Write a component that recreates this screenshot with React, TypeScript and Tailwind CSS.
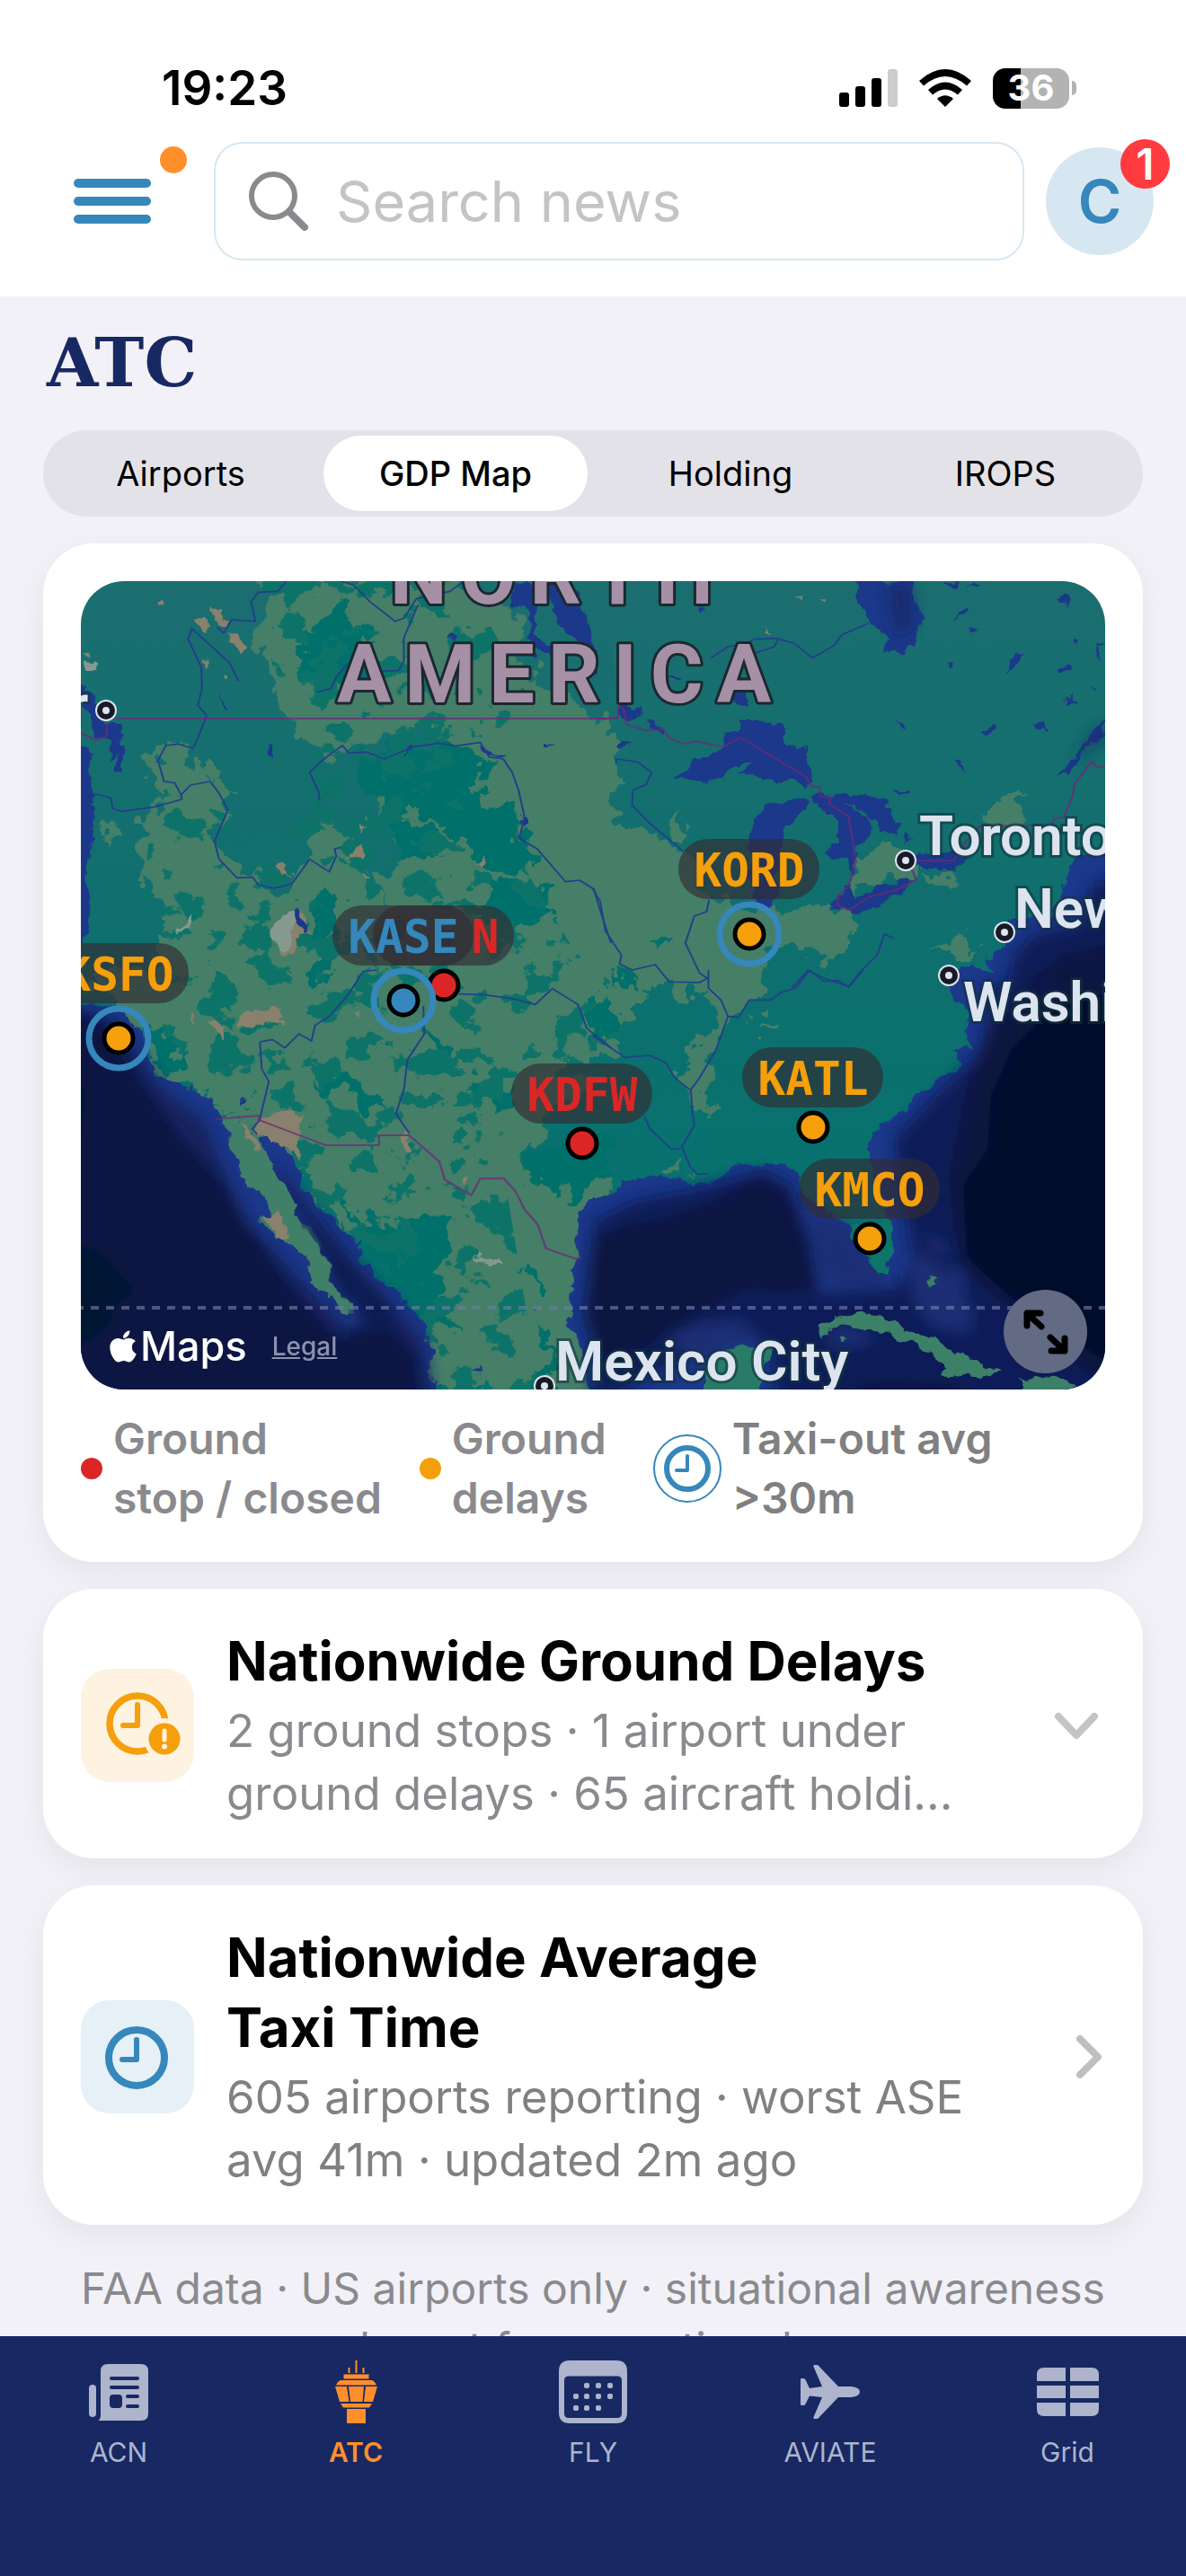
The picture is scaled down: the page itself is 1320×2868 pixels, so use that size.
import React, { useState } from 'react';
import { FaApple } from 'react-icons/fa';

const tabs = ['Airports', 'GDP Map', 'Holding', 'IROPS'];

const AMBER = '#f59f0b';
const RED = '#dc2626';
const BLUE = '#3587bc';

type Pin = { code: string; x: number; y: number; color: string; ring?: boolean; textX?: number };

const pins: Pin[] = [
    // most of this label sits under KASE, only its last letter shows
    { code: 'N', x: 494, y: 1097, color: RED, textX: 540 },
    { code: 'KSFO', x: 132, y: 1156, color: AMBER, ring: true },
    { code: 'KASE', x: 449, y: 1114, color: BLUE, ring: true },
    { code: 'KORD', x: 834, y: 1040, color: AMBER, ring: true },
    { code: 'KDFW', x: 648, y: 1273, color: RED },
    { code: 'KATL', x: 905, y: 1255, color: AMBER },
    { code: 'KMCO', x: 968, y: 1379, color: AMBER },
];

const cities = [
    { name: 'r', x: 76, y: 806, dotX: 118, dotY: 791 },
    { name: 'Toronto', x: 1023, y: 952, dotX: 1008, dotY: 958 },
    { name: 'New York', x: 1129, y: 1033, dotX: 1118, dotY: 1038 },
    { name: 'Washington', x: 1072, y: 1137, dotX: 1056, dotY: 1086 },
    { name: 'Mexico City', x: 618, y: 1537, dotX: 606, dotY: 1543 },
];

// The terrain is split into four tiles, every tile has its own drawing units
const tiles = [
    {
        at: 'translate(60 620) scale(0.3954 0.3333)',
        green: [
            'M600 81 L1180 81 L1320 230 L1290 300 L1380 420 L1500 510 L1568 545 L1568 1440 L1180 1440 L1000 1180 L900 1080 L1000 1000 L900 850 L1000 760 L1250 720 L1170 650 L1000 560 L850 640 L780 680 L700 620 L640 500 L590 330Z',
            'M300 640 L370 620 L420 700 L500 780 L460 870 L450 960 L560 1090 L640 1110 L720 1000 L760 860 L850 1010 L900 1110 L1100 1200 L1180 1440 L280 1440 L310 1200 L250 1040 L250 870 L330 800 L270 760Z',
            'M140 880 L180 870 L160 950 L148 965Z',
        ],
        teal: [
            'M700 260 L860 240 L880 400 L780 440 L690 400Z',
            'M880 650 L1100 620 L1260 690 L1170 780 L1200 840 L1290 830 L1310 940 L1360 1000 L1290 1080 L1150 960 L1050 880 L880 800 L840 720Z',
            'M940 880 L1060 900 L1080 1000 L980 1020Z M1200 1080 L1400 1120 L1420 1200 L1300 1250 L1210 1200Z M740 1100 L800 1120 L760 1440 L720 1440Z',
            'M720 250 L800 150 L850 180 L880 300 L800 330Z',
        ],
        tan: [
            'M298 150 l12 -10 l6 22 l-18 2z M402 210 l20 -12 l18 30 l-10 22z M440 170 l20 15 l32 30 l-12 18 l-25 -20z M488 260 l30 -2 l28 50 l-24 6z M416 352 l12 -12 l2 20 l-10 6z M80 320 l18 0 l6 22z M478 400 l12 -8 l4 16 l-12 8z',
            'M862 895 l24 12 l-14 16z M822 1000 l40 -45 l8 50z M622 1045 l16 -28 l20 40z M1190 1022 l34 -25 l-16 38z M872 1052 l20 20 l-8 6z M640 1330 l-26 -80 l50 -60 l50 0 l0 60 l-30 20 l-10 60z',
        ],
        pale: ['M345 1255 l42 -58 l-4 30 l-30 30z M612 1260 l30 -60 l34 -20 l-10 140 l-30 0z M80 345 l48 5 l-8 40 l-14 -15 l-20 0z'],
        water: [
            'M76 420 L110 460 L150 550 L180 560 L200 650 L190 710 L160 710 L178 650 L150 680 L165 620 L120 600 L110 540 L76 490Z',
            'M40 640 L98 640 L104 720 L110 800 L104 980 L84 1060 L104 1150 L94 1290 L40 1290Z',
            'M1285 130 L1310 82 L1340 95 L1355 180 L1350 270 L1420 300 L1400 340 L1335 280 L1335 180 L1290 160Z',
            'M1400 82 L1460 95 L1490 170 L1510 260 L1534 380 L1510 410 L1480 280 L1440 250 L1400 170Z',
            'M1106 270 l12 -18 l24 4 l-20 16z M605 625 l14 0 l2 30 l-14 0z M470 445 l8 65 l-6 0z M1378 612 l28 14 l-24 6z M672 1180 l14 0 l30 60 l-10 14 l-30 -40z M1342 300 l20 34 l-14 0z M1200 630 l16 0 l18 38 l40 0 l0 6 l-50 0z M975 662 l40 -34 l-4 16z M1308 910 l8 34 l14 8 l-20 0z M1318 860 l12 0 l0 36 l-12 0z',
        ],
        rivers: [
            'M655 82 L630 115 L575 118 L555 150 L567 215 L500 210 L478 255 L460 235',
            'M520 415 L495 355 L445 300 L388 240 L378 275 L415 370 L417 440 L405 495 L430 530 L400 620 L390 640 L350 625 L315 630 L293 680 L310 750 L340 755 L358 795 L360 810 L285 835 L190 850 L165 840 L160 805 L108 790',
            'M358 795 L385 762 L440 750 L465 790 L490 845 L452 950 L465 1010 L515 1072 L560 1070 L575 1095 L620 1107 L670 1092 L720 1010 L775 1052 L795 1000 L790 975 L808 970',
            'M748 815 L745 785 L720 720 L755 680 L812 630 L830 655 L880 652 L930 675 L1010 635 L1085 622 L1130 632 L1200 620 L1225 668 L1265 675 L1290 720 L1308 780 L1325 870 L1310 940 L1360 975 L1440 1085 L1480 1080 L1520 1110 L1540 1190 L1568 1290',
            'M810 82 L845 95 L890 150 L960 215 L985 205 L1020 140 L1115 115 L1150 85 M1025 160 L985 270 L985 350 L970 380 L920 382 M825 360 L795 400 L780 440 L740 452',
        ],
        borders: ['M175 540 L1568 540', 'M76 590 L120 612 L148 600 L150 555'],
    },
    {
        at: 'translate(660 620) scale(0.3954 0.3333)',
        green: [
            'M0 545 L50 545 L50 650 L80 760 L60 870 L160 930 L260 990 L330 1150 L500 1170 L740 1180 L700 1320 L640 1360 L560 1300 L490 1320 L490 1440 L0 1440Z',
            'M780 950 L900 980 L900 1080 L800 1100 L730 1130 L740 1020Z',
            'M1080 880 L1200 790 L1250 800 L1180 880 L1110 900Z M960 1330 L1010 1290 L1080 1280 L1060 1330Z M920 1040 L1000 1050 L1030 1090 L960 1080Z M210 900 L250 850 L260 940 L230 950Z',
        ],
        teal: ['M160 1280 l50 -20 l-10 60z M60 1400 l80 0 l0 40 l-60 0z'],
        tan: ['M755 148 l35 -18 l20 34z M565 125 l14 -4 l0 14z M636 138 l16 8 l0 16z M478 255 l14 -18 l12 20z'],
        pale: [],
        water: [
            'M230 740 L290 680 L370 640 L380 590 L440 540 L530 565 L540 630 L605 635 L600 690 L625 760 L600 760 L560 740 L510 770 L460 730 L415 730 L450 680 L400 700 L370 730 L320 755Z',
            'M440 935 L460 880 L490 825 L580 800 L605 810 L600 850 L550 900 L530 970 L520 1080 L515 1160 L490 1175 L450 1140 L440 1000Z',
            'M610 810 L650 790 L760 795 L820 815 L865 900 L850 940 L800 900 L770 850 L700 820 L780 870 L780 930 L745 980 L730 1060 L720 1050 L715 1000 L665 1010 L650 990 L690 960 L690 880Z',
            'M680 1170 L700 1100 L725 1100 L740 1150 L800 1100 L905 1075 L880 1110 L800 1160 L730 1195Z',
            'M900 1000 L1010 985 L1055 1010 L1020 1040 L940 1045 L905 1025Z',
            'M740 81 L905 81 L905 160 L930 210 L910 310 L890 290 L860 330 L820 330 L825 270 L760 190 L735 130Z',
            'M1442 535 L1410 570 L1380 640 L1305 738 L1340 725 L1400 630 L1442 590Z',
            'M1500 990 L1370 1000 L1330 1050 L1320 1130 L1300 1200 L1170 1215 L1160 1310 L1100 1350 L1140 1400 L1120 1440 L1500 1440Z M1030 1370 L1070 1350 L1130 1430 L1120 1440 L1030 1440Z',
            'M80 500 l50 0 l0 30 l-30 20 l-20 -10z M68 635 l20 -20 l20 0 l-20 25z M395 450 l40 0 l0 50 l-38 -12z M160 545 l40 25 l0 16 l-40 -10z M845 548 l20 4 l24 16 l-24 0z M1088 585 l40 -25 l16 14 l-30 24z M1245 562 l24 0 l14 20 l-20 8z M1018 680 l12 -6 l12 44 l-14 -20z M848 780 l38 0 l0 14 l-36 0z',
            'M1160 395 l8 -50 l50 -30 l-40 60z M1018 215 l20 -40 l18 10z M1050 235 l40 4 l-20 12z M1320 365 l20 0 l4 20 l-24 0z M1326 490 l24 -30 l18 30z M1355 265 l14 10 l-8 16z M1305 138 l24 -8 l16 44z M1412 290 l28 -10 l-20 20 l20 50 l-24 -30z M1400 418 l18 34 l-8 0z M980 82 l60 0 l-20 18z M1060 100 l14 -16 l14 4z M1000 350 l18 -6 l-2 24z M290 178 l14 -20 l12 20z M165 150 l34 0 l0 4z M875 960 l18 -28 l6 10z M208 410 l40 -12 l-14 20z',
        ],
        rivers: [
            'M65 690 L65 675 L125 685 L165 720 L150 760 L112 780 L110 830 L160 890 L255 985 M327 1145 L320 1185 L285 1200 L260 1290 L300 1390 L325 1410',
            'M0 1110 L20 1150 L35 1250 L80 1330 L75 1360 L110 1380 L175 1362 L215 1420 L300 1422 L325 1405',
            'M560 1440 L605 1382 L660 1412 L720 1435 L750 1390 L800 1330 L820 1260 L848 1275',
            'M332 338 L380 300 L430 290 L455 275 L515 272 L565 288 L618 338 L680 295 L700 260 L775 222 M455 322 L510 300 L522 272',
        ],
        borders: [
            'M0 540 L70 540 L72 500 L85 505 L95 560 L150 580 L195 575 L215 605 L255 625 L290 615 L365 635 L415 603 L600 735 L615 768 L637 768 L640 800 L670 805 L665 825 L720 868 L740 1020 L720 1100 L690 1130 L690 1165 L720 1180 L780 1135 L850 1115 L910 1078 L898 1045',
            'M905 1015 L1015 1015 L1050 950 L1090 900 L1290 897 L1300 875 L1325 870 L1350 800 L1355 760 L1405 682 L1420 705 L1442 697',
        ],
    },
    {
        at: 'translate(60 1080) scale(0.3954 0.3333)',
        green: ['M190 60 L1568 60 L1568 260 L1520 330 L1400 480 L1330 680 L1400 720 L1568 700 L1568 1420 L1000 1420 L1000 1100 L850 900 L700 700 L560 560 L380 400 L280 340 L200 160Z M440 460 L600 600 L700 760 L860 1150 L800 1180 L600 900 L460 600Z M76 0 L1568 0 L1568 80 L76 80Z'],
        teal: [
            'M810 760 L900 850 L1110 820 L1100 1000 L1060 1070 L1150 1200 L1050 1180 L960 1080 L860 900Z',
            'M740 340 L860 380 L920 420 L950 480 L860 450 L760 390Z M1380 600 L1568 560 L1568 690 L1480 750 L1330 700Z M1160 380 L1300 360 L1280 440 L1200 470Z M1030 180 L1120 250 L1150 340 L1060 260Z M300 160 L340 300 L390 300 L380 330 L300 320 L270 220Z M1500 80 L1568 90 L1568 240 L1500 180Z M1330 960 L1400 1120 L1350 1080Z M1360 1160 L1420 1380 L1380 1380Z',
        ],
        tan: [
            'M575 490 L650 472 L712 480 L690 520 L692 650 L670 600 L575 545Z M520 185 L525 130 L650 125 L640 180Z M445 172 l22 0 l14 60 l-24 -20z M375 140 l20 20 l4 40z M592 835 L640 805 L650 860 L665 900 L640 900Z M1148 710 l10 -26 l14 6 l-16 28z M968 560 L990 530 L1005 600 L995 606Z M843 152 l14 -6 l8 12z M796 825 l12 10 l4 26z M525 510 L560 540 L575 600 L560 600Z',
        ],
        pale: ['M1188 950 l20 18 l40 2 l10 14 l-30 0 l-34 -12z'],
        water: [
            'M40 100 L190 140 L240 210 L285 350 L390 400 L450 450 L470 500 L500 570 L530 690 L600 760 L620 830 L570 830 L640 900 L710 950 L720 1040 L790 1110 L830 1165 L850 1150 L845 1110 L790 1060 L770 960 L740 880 L690 830 L660 750 L590 690 L575 555 L640 570 L680 650 L710 740 L780 830 L860 910 L860 970 L990 1110 L1050 1190 L1070 1290 L1060 1330 L1090 1460 L40 1460Z',
            'M1568 765 L1510 765 L1475 820 L1470 900 L1485 970 L1455 1010 L1450 1180 L1490 1300 L1530 1460 L1568 1460Z',
            'M515 430 l14 -4 l8 20 l-10 10z M1165 1335 l36 -6 l0 12z',
        ],
        rivers: [
            'M905 0 L870 5 L830 80 L775 155 L735 185 L725 237 L690 213 L650 260 L615 232 L580 240 L585 330 L605 372 L585 470 L580 500 L558 530 L572 548',
            'M1040 120 L1042 215 L995 300 L985 400 L963 480 L1000 545',
            'M1140 80 L1215 83 L1300 98 L1355 115 L1403 62 L1475 115 L1500 195 L1568 260',
        ],
        borders: [
            'M455 498 L582 486 L575 500 L765 585 L915 585 L915 552 L1000 552 L1085 640 L1100 700 L1175 752 L1200 697 L1265 695 L1300 740 L1325 800 L1362 850 L1385 930 L1470 965 L1485 960',
        ],
    },
    {
        at: 'translate(660 1080) scale(0.3954 0.3333)',
        green: [
            'M330 0 L490 0 L500 110 L400 150 L380 220 L300 300 L335 340 L335 460 L270 480 L250 400 L230 340 L270 250 L350 170 L320 60Z',
            'M0 0 L180 0 L140 130 L60 160 L0 100Z M210 660 L240 630 L270 700 L200 680Z M0 730 L30 700 L30 770 L0 770Z M450 180 L520 170 L510 195 L460 195Z',
            'M280 1240 L420 1230 L430 1460 L280 1460Z',
        ],
        teal: [],
        tan: [],
        pale: [],
        water: [
            'M0 770 L60 740 L80 700 L180 690 L240 700 L290 720 L350 690 L380 655 L440 650 L540 650 L580 690 L600 760 L720 850 L730 880 L770 950 L800 1010 L830 1010 L845 900 L820 800 L790 700 L775 600 L800 520 L880 470 L920 410 L990 350 L1040 320 L1010 270 L1070 260 L1040 200 L1060 150 L1020 100 L1000 0 L1500 0 L1500 1460 L460 1460 L500 1255 L400 1260 L330 1310 L300 1460 L0 1460Z',
        ],
        rivers: [
            'M325 0 L325 60 L360 100 L380 155 L345 270 L300 360 L275 400 L280 480 L285 520 L250 590 L275 660 L295 682 L325 680',
            'M380 155 L410 158 L440 100 L500 100 L530 75 L570 60 L610 0 L650 38 L690 35 L720 57 L760 0',
            'M0 220 L90 292 L160 285 L205 310 L230 360 L275 402 M145 490 L160 530 L220 598 L248 597',
        ],
        borders: [],
    },
];

const depths = [
    { tile: 2, fill: '#12235f', d: 'M40 110 L180 170 L300 390 L420 500 L540 830 L640 960 L700 1040 L830 1200 L870 1180 L790 1070 L720 880 L640 740 L600 640 L660 700 L720 790 L850 980 L960 1120 L1040 1240 L1070 1460 L40 1460Z' },
    { tile: 2, fill: '#0d1742', d: 'M40 140 L150 180 L250 380 L360 560 L480 720 L560 880 L690 1090 L800 1230 L900 1190 L960 1200 L1020 1300 L1040 1460 L40 1460Z' },
    { tile: 2, fill: '#0f1c50', d: 'M700 800 L760 850 L850 1000 L960 1150 L900 1200 L860 1100 L800 1040 L760 900Z' },
    { tile: 2, fill: '#0d1a4b', d: 'M1530 850 L1568 820 L1568 1460 L1530 1300 L1490 1150 L1510 960Z' },
    { tile: 2, fill: '#031231', d: 'M40 900 L130 940 L240 1080 L180 1110 L150 1200 L40 1280Z M40 350 L90 400 L76 560 L40 600Z' },
    { tile: 3, fill: '#111f58', d: 'M0 840 L120 770 L300 730 L480 670 L560 720 L610 900 L640 1080 L860 1060 L900 950 L860 700 L850 560 L980 400 L1120 250 L1090 60 L1500 0 L1500 1460 L520 1460 L500 1250 L420 1240 L200 1330 L0 1460Z' },
    { tile: 3, fill: '#0d1540', d: 'M0 900 L100 850 L200 830 L330 780 L480 690 L560 790 L600 900 L620 1060 L520 1080 L440 1060 L360 1110 L220 1200 L60 1330 L0 1250Z' },
    { tile: 3, fill: '#0c1540', d: 'M1110 200 L1250 60 L1500 0 L1500 1460 L1280 1240 L1150 1100 L1040 1000 L1000 700 L1050 400Z M620 1400 L820 1370 L1000 1380 L1180 1460Z' },
    { tile: 3, fill: '#020e2a', d: 'M1180 260 L1300 120 L1500 60 L1500 1350 L1300 1200 L1160 1080 L1050 960 L1040 720 L1110 600 L1120 420Z' },
    { tile: 3, fill: '#1b2f75', d: 'M610 800 L720 860 L770 960 L840 1015 L790 1050 L700 1060 L640 1020Z M890 960 L950 960 L1070 1130 L1060 1210 L960 1190 L900 1100Z M905 880 L1000 920 L1000 960 L920 900Z M980 1010 L1040 990 L1050 1060 L1020 1090Z M640 1230 L720 1180 L800 1240 L700 1260Z M210 1230 L300 1180 L420 1170 L480 1240 L380 1250 L300 1330Z' },
    { tile: 1, fill: '#172c6b', d: 'M835 90 L890 90 L900 220 L860 270 L840 180Z M1442 560 L1405 600 L1350 690 L1442 600Z' },
    { tile: 1, fill: '#111f58', d: 'M1500 1060 L1400 1100 L1380 1220 L1240 1260 L1180 1340 L1160 1460 L1500 1460Z' },
    { tile: 1, fill: '#0d1842', d: 'M1500 1280 L1320 1330 L1200 1440 L1500 1460Z' },
];

const islands =
    'M630 1200 L680 1160 L750 1145 L830 1160 L900 1210 L960 1230 L1050 1290 L1150 1345 L1090 1360 L975 1355 L1000 1330 L930 1260 L850 1225 L780 1200 L700 1180 L640 1220Z M1195 1365 L1290 1360 L1365 1385 L1330 1410 L1230 1410Z M695 1235 l14 -6 l8 14 l-14 8z M945 1015 l20 40 l-20 8z';

const details = [
    { key: 'tan', fill: '#89816d' },
    { key: 'pale', fill: '#85998f' },
    { key: 'water', fill: '#1f388a' },
] as const;

const TerrainMap = () => (
    <svg viewBox="90 647 1140 900" className="block w-full" role="img" aria-label="Ground delay program map of North America">
        <defs>
            <linearGradient id="land" x1="0" y1="0" x2="0" y2="1">
                <stop offset="0" stopColor="#1c6e70" />
                <stop offset="0.5" stopColor="#0d706e" />
                <stop offset="1" stopColor="#00736f" />
            </linearGradient>
            <filter id="rough" x="0" y="0" width="1" height="1">
                <feTurbulence type="fractalNoise" baseFrequency="0.06" numOctaves="3" seed="4" result="n" />
                <feDisplacementMap in="SourceGraphic" in2="n" scale="16" xChannelSelector="R" yChannelSelector="G" />
            </filter>
            <filter id="very-rough" x="0" y="0" width="1" height="1">
                <feTurbulence type="fractalNoise" baseFrequency="0.04" numOctaves="4" seed="9" result="n" />
                <feDisplacementMap in="SourceGraphic" in2="n" scale="50" xChannelSelector="R" yChannelSelector="G" />
            </filter>
            <filter id="patches" x="0" y="0" width="1" height="1">
                <feTurbulence type="fractalNoise" baseFrequency="0.026 0.03" numOctaves="5" seed="21" />
                <feColorMatrix values="0 0 0 0 0  0 0 0 0 0  0 0 0 0 0  40 0 0 0 -22.8" result="m" />
                <feComposite in="SourceGraphic" in2="m" operator="in" />
            </filter>
            <filter id="soft">
                <feGaussianBlur stdDeviation="8" />
            </filter>
            <clipPath id="plains">
                <path d="M290 647 H520 L590 780 L500 860 L580 960 L640 1060 L700 1110 L680 1200 L560 1200 L560 1300 L600 1547 H480 L330 1300 L190 1200 L160 1000 L170 880 L330 930Z" />
            </clipPath>
        </defs>

        <rect x="60" y="620" width="1220" height="960" fill="url(#land)" />
        <g filter="url(#very-rough)">
            <rect x="60" y="620" width="1220" height="960" fill="none" />
            {tiles.map((tile) => (
                <g key={tile.at} transform={tile.at}>
                    {tile.green.map((d) => <path key={d} d={d} fill="#457f67" />)}
                </g>
            ))}
            {tiles.map((tile) => (
                <g key={tile.at} transform={tile.at}>
                    {tile.teal.map((d) => <path key={d} d={d} fill="#06706a" />)}
                </g>
            ))}
        </g>
        <g clipPath="url(#plains)">
            <rect x="60" y="620" width="1220" height="960" fill="#0f7368" filter="url(#patches)" />
        </g>
        <g filter="url(#rough)">
            <rect x="60" y="620" width="1220" height="960" fill="none" />
            {details.map((layer) =>
                tiles.map((tile) => (
                    <g key={layer.key + tile.at} transform={tile.at} fill={layer.fill}>
                        {tile[layer.key].map((d) => <path key={d} d={d} />)}
                    </g>
                ))
            )}
        </g>
        <g filter="url(#soft)">
            {depths.map((area) => (
                <path key={area.d} d={area.d} fill={area.fill} transform={tiles[area.tile].at} />
            ))}
        </g>
        <g filter="url(#rough)">
            <rect x="60" y="620" width="1220" height="960" fill="none" />
            <g transform={tiles[3].at}>
                <path d={islands} fill="#3c8068" />
                <path d="M722 840 L835 840 L848 900 L830 1012 L805 1012 L770 950 L730 890Z" fill="#0a7469" />
                <path d="M300 1460 L330 1310 L400 1260 L500 1255 L460 1460Z" fill="#2c7a68" />
            </g>
            <path d="M575 575 L640 700 L700 850 L760 940 L790 1060 L845 1120 L830 1160 L720 1040 L715 950 L640 880 L620 790 L540 700 L510 590 L480 500 L560 520Z" fill="#3f7f67" transform={tiles[2].at} />
            <path d="M592 835 L640 805 L650 860 L665 900 L640 900Z M525 510 L560 540 L575 600 L560 600Z" fill="#89816d" transform={tiles[2].at} />
        </g>
        <g fill="none" strokeLinejoin="round">
            {tiles.map((tile) => (
                <g key={tile.at} transform={tile.at}>
                    {tile.rivers.map((d) => <path key={d} d={d} stroke="#223f88" strokeWidth="5" />)}
                    {tile.borders.map((d) => <path key={d} d={d} stroke="#6e2a78" strokeWidth="6" strokeOpacity="0.75" />)}
                </g>
            ))}
        </g>
        <path d="M84 1456 H1230" stroke="#6f7ba8" strokeOpacity="0.65" strokeWidth="4" strokeDasharray="9 8" />

        <g fontFamily="Roboto, sans-serif" fontWeight="700" fontSize="90" letterSpacing="15" fill="#a690a6" stroke="#1b2830" strokeWidth="6" paintOrder="stroke" strokeLinejoin="round">
            <text x="434" y="672">NORTH</text>
            <text x="375" y="782">AMERICA</text>
        </g>

        {cities.map((city) => (
            <g key={city.name}>
                <circle cx={city.dotX} cy={city.dotY} r="12" fill="#dde4ef" />
                <circle cx={city.dotX} cy={city.dotY} r="10" fill="#181b25" />
                <circle cx={city.dotX} cy={city.dotY} r="4" fill="#dde4ef" />
                <text x={city.x} y={city.y} fontFamily="Roboto, sans-serif" fontWeight="600" fontSize="62" fill="#dde4ef" stroke="#12343d" strokeOpacity="0.6" strokeWidth="6" paintOrder="stroke">
                    {city.name}
                </text>
            </g>
        ))}

        {pins.map((pin) => {
            const top = pin.y - (pin.ring ? 106 : 89);
            return (
                <g key={pin.code}>
                    <circle cx={pin.x} cy={pin.y} r="16" fill={pin.color} stroke="#000" strokeWidth="5" />
                    {pin.ring && <circle cx={pin.x} cy={pin.y} r="33" fill="none" stroke={BLUE} strokeWidth="7" />}
                    <rect x={pin.x - 79} y={top} width="157" height="67" rx="33" fill="#322c34" fillOpacity="0.66" />
                    <text x={pin.textX ?? pin.x} y={top + 53} textAnchor="middle" fontFamily="DejaVu Sans Mono, monospace" fontWeight="700" fontSize="51" fill={pin.color}>
                        {pin.code}
                    </text>
                </g>
            );
        })}
    </svg>
);

const StatusIcons = () => (
    <div className="flex items-center gap-6">
        <svg width="65" height="42" viewBox="0 0 65 42" aria-hidden="true">
            <rect y="26" width="11" height="16" rx="3" />
            <rect x="18" y="19" width="11" height="23" rx="3" />
            <rect x="36" y="10" width="11" height="32" rx="3" />
            <rect x="54" width="11" height="42" rx="3" fill="#cccccc" />
        </svg>
        <svg width="58" height="42" viewBox="0 0 58 42" aria-hidden="true">
            <path d="M0 13 Q29 -13 58 13 L53 18.500 Q29 -2.500 5 18.500Z" />
            <path d="M10 23 Q29 6 48 23 L43 28.500 Q29 16.500 15 28.500Z" />
            <path d="M20 33 Q29 25.500 38 33 L29 42Z" />
        </svg>
        <div className="flex items-center gap-[3px]">
            <div className="flex h-[45px] w-[85px] items-center justify-center rounded-[14px] bg-[linear-gradient(90deg,#000_31px,#b3b3b3_31px)] text-[40px] leading-none font-bold text-white">
                36
            </div>
            <div className="h-4 w-[5px] rounded-r-full bg-[#b3b3b3]" />
        </div>
    </div>
);

const ClockAlertIcon = () => (
    <svg width="126" height="126" viewBox="0 0 126 126" fill="none" aria-hidden="true">
        <circle cx="63" cy="61" r="31" stroke={AMBER} strokeWidth="7.500" />
        <path d="M63 40 V63 H47" stroke={AMBER} strokeWidth="6" strokeLinecap="round" strokeLinejoin="round" />
        <circle cx="93" cy="78" r="23" fill="#fef2e1" />
        <circle cx="93" cy="78" r="17.500" fill={AMBER} />
        <path d="M93 69 V79" stroke="#fef2e1" strokeWidth="5" strokeLinecap="round" />
        <circle cx="93" cy="86.500" r="3" fill="#fef2e1" />
    </svg>
);

const ClockIcon = () => (
    <svg width="126" height="126" viewBox="0 0 126 126" fill="none" aria-hidden="true">
        <circle cx="62" cy="64" r="31" stroke={BLUE} strokeWidth="8" />
        <path d="M62 44 V66 H46" stroke={BLUE} strokeWidth="6" strokeLinecap="round" strokeLinejoin="round" />
    </svg>
);

const RingClockIcon = () => (
    <svg width="76" height="76" viewBox="0 0 76 76" fill="none" className="shrink-0" stroke={BLUE} aria-hidden="true">
        <circle cx="38" cy="38" r="37" strokeWidth="2" />
        <circle cx="38" cy="38" r="23" strokeWidth="6" />
        <path d="M38 24 V40 H26" strokeWidth="4" strokeLinecap="round" strokeLinejoin="round" />
    </svg>
);

const NewsIcon = () => (
    <svg width="66" height="63" viewBox="0 0 66 63" fill="currentColor" aria-hidden="true">
        <rect y="23" width="8" height="36" rx="4" />
        <path fillRule="evenodd" d="M21 0 H58 Q66 0 66 8 V55 Q66 63 58 63 H10 Q13 62 13 56 V8 Q13 0 21 0Z M25 14 Q23 14 23 16 Q23 18 25 18 H54 Q56 18 56 16 Q56 14 54 14Z M25 24 Q23 24 23 26 Q23 28 25 28 H54 Q56 28 56 26 Q56 24 54 24Z M27 34 Q23 34 23 38 V45 Q23 49 27 49 H33 Q37 49 37 45 V38 Q37 34 33 34Z M43 34 Q41 34 41 36 Q41 38 43 38 H54 Q56 38 56 36 Q56 34 54 34Z M43 45 Q41 45 41 47 Q41 49 43 49 H54 Q56 49 56 47 Q56 45 54 45Z" />
    </svg>
);

const TowerIcon = () => (
    <svg width="47" height="70" viewBox="0 0 47 70" fill="currentColor" aria-hidden="true">
        <path d="M22.500 0 h2 v14 h-2z M14.500 8 h2 v6 h-2z M30.500 8 h2 v6 h-2z M9.500 15.500 h28 v5 h-28z" />
        <path d="M6 22 H41 Q44 23 46 27.500 H1 Q3 23 6 22Z" />
        <path d="M0 29 H13 L15.500 46 H5Z M15 29 H32 L30.500 46 H17Z M34 29 H47 L42 46 H32Z" />
        <path d="M6 48 H41 L38 52.500 H9Z M13 54 h21 v16 h-21z" />
    </svg>
);

const CalendarIcon = () => (
    <svg width="76" height="70" viewBox="0 0 76 70" fill="currentColor" aria-hidden="true">
        <path fillRule="evenodd" d="M12 0 H64 Q76 0 76 12 V58 Q76 70 64 70 H12 Q0 70 0 58 V12 Q0 0 12 0Z M11 17.500 Q6 17.500 6 22 V59 Q6 64 11 64 H65 Q70 64 70 59 V22 Q70 17.500 65 17.500Z" />
        {[[31, 28], [44, 28], [57, 28], [19, 40], [31, 40], [44, 40], [57, 40], [19, 53], [31, 53], [44, 53]].map(([x, y]) => (
            <rect key={`${x}-${y}`} x={x - 3} y={y - 3} width="6" height="6" rx="2" />
        ))}
    </svg>
);

const PlaneIcon = () => (
    <svg width="66" height="60" viewBox="0 0 66 60" fill="currentColor" aria-hidden="true">
        <path d="M15 0 H18 Q20 0 21 2 L42 24 H56 Q66 25 66 30 Q66 35 56 36 H42 L21 58 Q20 60 18 60 H15 Q14 60 14.500 58 L24 36 L10 34.500 L5.500 43.500 Q5 45 3 45 H1 Q0 45 0 44 V16 Q0 15 1 15 H3 Q5 15 5.500 16.500 L10 26 L24 24 L14.500 2 Q14 0 15 0Z" />
    </svg>
);

const GridIcon = () => (
    <svg width="69" height="54" viewBox="0 0 69 54" fill="currentColor" aria-hidden="true">
        <path d="M8 0 H32 V15 H0 V8 Q0 0 8 0Z M37 0 H61 Q69 0 69 8 V15 H37Z M0 20 H32 V34 H0Z M37 20 H69 V34 H37Z M0 39 H32 V54 H8 Q0 54 0 46Z M37 39 H69 V46 Q69 54 61 54 H37Z" />
    </svg>
);

const navItems = [
    { label: 'ACN', icon: <NewsIcon /> },
    { label: 'ATC', icon: <TowerIcon /> },
    { label: 'FLY', icon: <CalendarIcon /> },
    { label: 'AVIATE', icon: <PlaneIcon /> },
    { label: 'Grid', icon: <GridIcon /> },
];

const App = () => {
    const [tab, setTab] = useState('GDP Map');
    const [search, setSearch] = useState('');

    return (
        <div className="flex h-screen flex-col overflow-hidden bg-[#f2f1f7] font-[Inter,sans-serif] text-black">
            <header className="shrink-0 bg-white pt-14 pb-10">
                <div className="flex h-[84px] items-center justify-between pr-[122px] pl-[180px]">
                    <span className="text-[53px] leading-none font-semibold">19:23</span>
                    <StatusIcons />
                </div>
                <div className="mt-[18px] flex items-center gap-6 pr-9 pl-[82px]">
                    <button type="button" aria-label="Menu" className="relative mr-[46px] flex w-[86px] flex-col gap-[10px]">
                        <span className="h-[10px] rounded-full bg-[#3587bc]" />
                        <span className="h-[10px] rounded-full bg-[#3587bc]" />
                        <span className="h-[10px] rounded-full bg-[#3587bc]" />
                        <span className="absolute -top-9 -right-10 size-[30px] rounded-full bg-[#ff8f2b]" />
                    </button>
                    <label className="flex h-[132px] min-w-0 flex-1 items-center gap-[30px] rounded-[32px] border-2 border-[#d7e7f1] px-9">
                        <svg width="68" height="68" viewBox="0 0 68 68" fill="none" stroke="#8a8a8e" className="shrink-0" aria-hidden="true">
                            <circle cx="28" cy="28" r="24" strokeWidth="6" />
                            <path d="M46 46 L63 63" strokeWidth="8" strokeLinecap="round" />
                        </svg>
                        <input
                            type="text"
                            aria-label="Search news"
                            placeholder="Search news"
                            value={search}
                            onChange={(e) => setSearch(e.target.value)}
                            className="min-w-0 flex-1 bg-transparent text-[63px] outline-none placeholder:text-[#c4c4c6]"
                        />
                    </label>
                    <button type="button" aria-label="Profile" className="relative size-[120px] shrink-0 rounded-full bg-[#d7e7f1] text-[66px] font-semibold text-[#3587bc]">
                        C
                        <span className="absolute -top-[9px] -right-[18px] flex size-[55px] items-center justify-center rounded-full bg-[#ff3b3f] text-[48px] leading-none font-semibold text-white">
                            1
                        </span>
                    </button>
                </div>
            </header>

            <main className="min-h-0 flex-1 overflow-hidden px-12 pt-9">
                <h1 className="pl-1 font-['DejaVu_Serif',serif] text-[74px] leading-[76px] font-bold text-[#172863]">ATC</h1>

                <div role="tablist" className="mt-[37px] grid h-24 grid-cols-4 rounded-full bg-[#e3e2e8]">
                    {tabs.map((name) => (
                        <button
                            key={name}
                            type="button"
                            role="tab"
                            aria-selected={tab === name}
                            onClick={() => setTab(name)}
                            className={tab === name ? 'm-[6px] rounded-full bg-white text-[38px] font-medium' : 'm-[6px] rounded-full text-[38px]'}
                        >
                            {name}
                        </button>
                    ))}
                </div>

                <section className="mt-[30px] rounded-[56px] bg-white px-[42px] pt-[42px] pb-[38px] shadow-[0_12px_36px_rgba(0,0,0,0.06)]">
                    <div className="relative overflow-hidden rounded-[48px]">
                        <TerrainMap />
                        <div className="absolute bottom-[26px] left-8 flex items-center gap-1 text-white">
                            <FaApple className="h-10 w-[30px]" aria-hidden="true" />
                            <span className="text-[45px] leading-none font-medium">Maps</span>
                            <a href="#legal" className="ml-6 text-[28px] leading-none font-medium text-[#8c93ae] underline">Legal</a>
                        </div>
                        <button type="button" aria-label="Expand map" className="absolute right-5 bottom-[18px] flex size-[93px] items-center justify-center rounded-full bg-[#636a84]">
                            <svg width="50" height="50" viewBox="0 0 50 50" fill="none" stroke="#000" strokeWidth="7" strokeLinecap="round" strokeLinejoin="round" aria-hidden="true">
                                <path d="M4 18 V4 H19 M4 4 L20 19" />
                                <path d="M46 32 V46 H31 M46 46 L30 31" />
                            </svg>
                        </button>
                    </div>
                    <div className="mt-[22px] flex items-center text-[48px] leading-[66px] font-semibold text-[#8a8a8e]">
                        <div className="flex items-center gap-3">
                            <span className="size-6 shrink-0 rounded-full bg-[#dc2626]" />
                            <span>Ground<br />stop / closed</span>
                        </div>
                        <div className="ml-[42px] flex items-center gap-3">
                            <span className="size-6 shrink-0 rounded-full bg-[#f59f0b]" />
                            <span>Ground<br />delays</span>
                        </div>
                        <div className="ml-[52px] flex items-center gap-3 text-[#808080]">
                            <RingClockIcon />
                            <span>Taxi-out avg<br />&gt;30m</span>
                        </div>
                    </div>
                </section>

                <button type="button" className="mt-[30px] flex w-full items-center rounded-[56px] bg-white px-[42px] pt-[41px] pb-[37px] text-left shadow-[0_12px_36px_rgba(0,0,0,0.06)]">
                    <span className="shrink-0 rounded-[32px] bg-[#fef2e1]"><ClockAlertIcon /></span>
                    <span className="ml-9 min-w-0 flex-1">
                        <span className="block text-[60px] leading-[78px] font-bold">Nationwide Ground Delays</span>
                        <span className="mt-1 block text-[51px] leading-[70px] text-[#8a8a8e]">
                            2 ground stops · 1 airport under<br />ground delays · 65 aircraft holdi...
                        </span>
                    </span>
                    <svg width="64" height="48" viewBox="0 0 64 48" fill="none" stroke="#c4c4c6" strokeWidth="8" strokeLinecap="round" strokeLinejoin="round" aria-hidden="true">
                        <path d="M12 14 L32 35 L52 14" />
                    </svg>
                </button>

                <button type="button" className="mt-[30px] flex w-full items-center rounded-[56px] bg-white px-[42px] pt-[41px] pb-[37px] text-left shadow-[0_12px_36px_rgba(0,0,0,0.06)]">
                    <span className="shrink-0 rounded-[32px] bg-[#e5f0f7]"><ClockIcon /></span>
                    <span className="ml-9 min-w-0 flex-1">
                        <span className="block text-[60px] leading-[78px] font-bold">Nationwide Average<br />Taxi Time</span>
                        <span className="mt-1 block text-[51px] leading-[70px] text-[#808080]">
                            605 airports reporting · worst ASE<br />avg 41m · updated 2m ago
                        </span>
                    </span>
                    <svg width="40" height="56" viewBox="0 0 40 56" fill="none" stroke="#bfbfbf" strokeWidth="8" strokeLinecap="round" strokeLinejoin="round" aria-hidden="true">
                        <path d="M12 8 L32 28 L12 48" />
                    </svg>
                </button>

                <p className="mt-[38px] text-center text-[48px] leading-[66px] text-[#8a8a8e]">
                    FAA data · US airports only · situational awareness<br />only, not for operational use
                </p>
            </main>

            <nav className="grid h-[267px] shrink-0 grid-cols-5 items-start bg-[#172863] pt-[27px]">
                {navItems.map((item) => (
                    <a
                        key={item.label}
                        href={'#' + item.label.toLowerCase()}
                        className={item.label === 'ATC' ? 'flex flex-col items-center gap-[14px] text-[30px] leading-9 font-semibold text-[#ff8f2b]' : 'flex flex-col items-center gap-[14px] text-[30px] leading-9 text-[#adb4cb]'}
                    >
                        <span className="flex h-[70px] items-center">{item.icon}</span>
                        {item.label}
                    </a>
                ))}
            </nav>
        </div>
    );
};

export default App;
